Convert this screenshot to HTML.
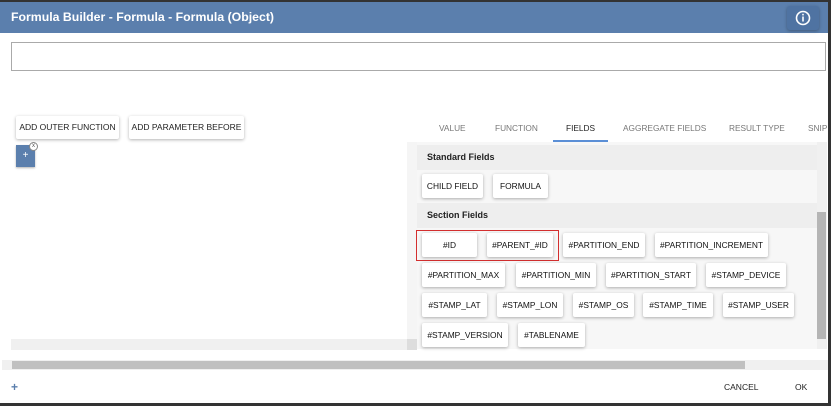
<!DOCTYPE html>
<html><head><style>
*{box-sizing:border-box;margin:0;padding:0}
body{width:831px;height:406px;background:#333;font-family:"Liberation Sans",sans-serif;position:relative;overflow:hidden}
.dlg{position:absolute;left:0;top:2px;width:828px;height:401px;background:#fff}
.hdr{position:absolute;left:0;top:0;width:828px;height:31px;background:#5b7fad;color:#fff;font-weight:bold;font-size:12.3px;line-height:31px;padding-left:11px}
.info{position:absolute;left:787px;top:4px;width:32px;height:24px;background:#4f73a2;border-radius:3px;box-shadow:0 1px 3px rgba(0,0,0,.3)}
.ta{position:absolute;left:11px;top:40px;width:815px;height:29px;border:1px solid #aaa}
.btn{position:absolute;height:23px;background:#fff;box-shadow:0 1px 3px rgba(0,0,0,.3);font-size:8.5px;color:#222;line-height:23px;text-align:center;white-space:nowrap;border-radius:2px}
.tab{position:absolute;top:121px;font-size:8.3px;color:#777}
.abs{position:absolute}
.fh{position:absolute;left:417px;width:400px;height:25px;background:#eee;font-size:9px;font-weight:bold;color:#222;line-height:25px;padding-left:10px}
.f{position:absolute;height:24px;background:#fff;box-shadow:0 1px 3px rgba(0,0,0,.3);font-size:8.4px;color:#111;line-height:24px;text-align:center;white-space:nowrap;border-radius:2px}
</style></head><body>
<div class="dlg">
<div class="hdr">Formula Builder - Formula - Formula (Object)</div>
<div class="info"><svg width="32" height="24"><circle cx="16" cy="12" r="6.5" fill="none" stroke="#fff" stroke-width="1.6"/><rect x="15.2" y="10.5" width="1.6" height="5" fill="#fff"/><rect x="15.2" y="7.8" width="1.6" height="1.6" fill="#fff"/></svg></div>
<div class="ta"></div>
<div class="btn" style="left:16px;top:114px;width:103px">ADD OUTER FUNCTION</div>
<div class="btn" style="left:129px;top:114px;width:115px">ADD PARAMETER BEFORE</div>
<div class="abs" style="left:16px;top:143px;width:19px;height:22px;background:#5b7fad;color:#fff;font-size:10px;text-align:center;line-height:22px;box-shadow:0 1px 2px rgba(0,0,0,.3)">+</div>
<div class="abs" style="left:29px;top:140px;width:9px;height:9px;border:1px solid #888;border-radius:50%;background:#fff;font-size:6px;line-height:7px;text-align:center;color:#555">x</div>
<div class="abs" style="left:407px;top:140px;width:10px;height:197px;background:#f5f5f5"></div>
<div class="abs" style="left:11px;top:337px;width:396px;height:11px;background:#f0f0f0"></div>
<div class="abs" style="left:407px;top:337px;width:10px;height:11px;background:#ddd"></div>
<div class="tab" style="left:439px">VALUE</div>
<div class="tab" style="left:495px">FUNCTION</div>
<div class="tab" style="left:566px;color:#222">FIELDS</div>
<div class="tab" style="left:623px">AGGREGATE FIELDS</div>
<div class="tab" style="left:729px">RESULT TYPE</div>
<div class="tab" style="left:808px">SNIP</div>
<div class="abs" style="left:553px;top:138px;width:55px;height:2px;background:#5b8fd6"></div>
<div class="abs" style="left:417px;top:140px;width:400px;height:207px;background:#f7f7f7"></div>
<div class="abs" style="left:817px;top:140px;width:10px;height:207px;background:#f0f0f0"></div>
<div class="abs" style="left:817px;top:210px;width:9px;height:127px;background:#b5b5b5"></div>
<div class="fh" style="top:143px">Standard Fields</div>
<div class="f" style="left:422px;top:172px;width:61px">CHILD FIELD</div>
<div class="f" style="left:493px;top:172px;width:55px">FORMULA</div>
<div class="fh" style="top:201px">Section Fields</div>
<div class="abs" style="left:416px;top:228px;width:143px;height:31px;border:1.5px solid #d32f2f"></div>
<div class="f" style="left:422px;top:231px;width:55px">#ID</div>
<div class="f" style="left:487px;top:231px;width:66px">#PARENT_#ID</div>
<div class="f" style="left:563px;top:231px;width:82px">#PARTITION_END</div>
<div class="f" style="left:655px;top:231px;width:113px">#PARTITION_INCREMENT</div>
<div class="f" style="left:422px;top:261px;width:83px">#PARTITION_MAX</div>
<div class="f" style="left:516px;top:261px;width:80px">#PARTITION_MIN</div>
<div class="f" style="left:606px;top:261px;width:90px">#PARTITION_START</div>
<div class="f" style="left:706px;top:261px;width:80px">#STAMP_DEVICE</div>
<div class="f" style="left:422px;top:291px;width:65px">#STAMP_LAT</div>
<div class="f" style="left:497px;top:291px;width:66px">#STAMP_LON</div>
<div class="f" style="left:573px;top:291px;width:61px">#STAMP_OS</div>
<div class="f" style="left:643px;top:291px;width:70px">#STAMP_TIME</div>
<div class="f" style="left:723px;top:291px;width:71px">#STAMP_USER</div>
<div class="f" style="left:422px;top:321px;width:86px">#STAMP_VERSION</div>
<div class="f" style="left:518px;top:321px;width:67px">#TABLENAME</div>
<div class="abs" style="left:2px;top:358px;width:826px;height:10px;background:#f0f0f0"></div>
<div class="abs" style="left:12px;top:359px;width:733px;height:8px;background:#c0c0c0"></div>
<div class="abs" style="left:11px;top:378px;color:#5b7fad;font-size:12px;font-weight:bold">+</div>
<div class="abs" style="left:724px;top:380px;font-size:8.5px;color:#222">CANCEL</div>
<div class="abs" style="left:795px;top:380px;font-size:8.5px;color:#222">OK</div>
</div>
</body></html>
